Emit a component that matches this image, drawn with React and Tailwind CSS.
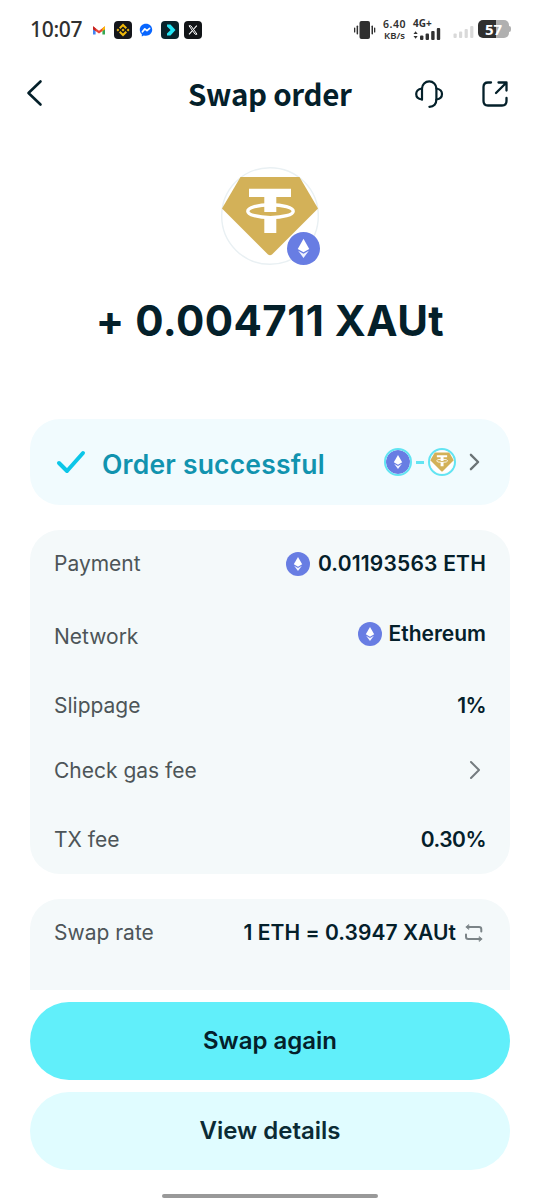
import React from "react";

function EthIcon({ className }) {
  return (
    <svg viewBox="0 0 32 32" className={className}>
      <circle cx="16" cy="16" r="16" fill="#687de3" />
      <path d="M16 6.5 L21.6 16.4 L16 19.6 L10.4 16.4 Z" fill="#fff" />
      <path d="M10.8 18.2 L16 21.2 L21.2 18.2 L16 25.2 Z" fill="#f1f3ff" />
    </svg>
  );
}

function TetherGoldIcon({ className }) {
  return (
    <svg viewBox="0 0 98 98" className={className}>
      <circle cx="49" cy="49" r="48.3" fill="#fff" stroke="#e9f0f3" strokeWidth="1.4" />
      <path d="M19.5 10 H78.5 L97 41.5 L51 87.5 Q49 89 47 87.5 L1 41.5 Z" fill="#d3b158" />
      <path d="M28 21.7 H70 V30 H55.3 V45 H43.3 V30 H28 Z" fill="#fff" />
      <path d="M43.3 50 H55.3 V66 H43.3 Z" fill="#fff" />
      <ellipse cx="49.5" cy="44.2" rx="22.7" ry="6.4" fill="none" stroke="#fff" strokeWidth="3.4" />
    </svg>
  );
}

function Chevron({ className, width = 2.2 }) {
  return (
    <svg viewBox="0 0 12 20" className={className} fill="none" stroke="currentColor" strokeWidth={width} strokeLinecap="round" strokeLinejoin="round">
      <path d="M2 2 L10 10 L2 18" />
    </svg>
  );
}

function StatusBar() {
  return (
    <div className="flex h-[60px] shrink-0 items-center justify-between pl-[30px] pr-[29px]">
      <div className="flex items-center">
        <span className="mb-[2px] w-[60px] font-['Noto_Sans'] text-[21px] font-medium leading-none tracking-[-0.3px] text-[#303030]">10:07</span>
        <div className="flex items-center gap-[5.5px]">
          {/* Gmail */}
          <svg viewBox="0 0 18 18" className="h-[18px] w-[18px]">
            <path d="M3 6 V13.5 H5.6 V8" fill="#4285f4" />
            <path d="M15 6 V13.5 H12.4 V8" fill="#34a853" />
            <path d="M3 5.2 L9 9.8 L15 5.2 V8.2 L9 12.6 L3 8.2 Z" fill="#ea4335" />
            <path d="M12.4 7.2 L15 5.2 V8.2 L12.4 10 Z" fill="#fbbc04" />
            <path d="M3 5.2 L5.6 7.2 V10 L3 8.2 Z" fill="#c5221f" />
          </svg>
          {/* Binance */}
          <svg viewBox="0 0 18 18" className="h-[18px] w-[18px]">
            <rect width="18" height="18" rx="4" fill="#14161b" />
            <g fill="#f0b90b">
              <path d="M9 2.6 L13 6.6 L11.6 8 L9 5.4 L6.4 8 L5 6.6 Z" />
              <path d="M9 15.4 L13 11.4 L11.6 10 L9 12.6 L6.4 10 L5 11.4 Z" />
              <path d="M9 7.5 L10.5 9 L9 10.5 L7.5 9 Z" />
              <path d="M3.9 7.6 L5.3 9 L3.9 10.4 L2.5 9 Z" />
              <path d="M14.1 7.6 L15.5 9 L14.1 10.4 L12.7 9 Z" />
            </g>
          </svg>
          {/* Messenger */}
          <svg viewBox="0 0 18 18" className="h-[18px] w-[18px]">
            <path d="M9 2.8 C5.4 2.8 2.8 5.4 2.8 8.8 C2.8 10.6 3.5 12.2 4.8 13.3 V15.4 L6.8 14.4 C11.4 15.7 15.2 12.8 15.2 8.8 C15.2 5.4 12.6 2.8 9 2.8 Z" fill="#0866ff" />
            <path d="M5.4 10.8 L7.8 7.9 L10 9.6 L12.6 7.3" fill="none" stroke="#fff" strokeWidth="1.7" strokeLinejoin="round" strokeLinecap="round" />
          </svg>
          <svg viewBox="0 0 18 18" className="h-[18px] w-[18px]">
            <rect width="18" height="18" rx="4" fill="#08232b" />
            <path d="M6 3.5 H9.5 L14.5 9 L9.5 14.5 H6 V12.6 L9.6 9 L6 5.4 Z" fill="#22e5f5" />
          </svg>
          {/* X */}
          <svg viewBox="0 0 18 18" className="h-[18px] w-[18px]" fill="none" stroke="#fff">
            <rect width="18" height="18" rx="4" fill="#111417" stroke="none" />
            <path d="M5 4.8 H6.9 L13 13.2 H11.1 Z" strokeWidth="1" />
            <path d="M12.8 4.6 L9.8 8 M8.2 9.9 L5 13.4" strokeWidth="1.1" />
          </svg>
        </div>
      </div>

      <div className="flex items-center text-[#303030]">
        <svg viewBox="0 0 22 20" className="h-5 w-[22px]" fill="currentColor">
          <rect x="5.5" y="1" width="10.5" height="18" rx="2" />
          <rect x="0" y="7.5" width="1.3" height="5" rx="0.6" />
          <rect x="2.6" y="5.5" width="1.5" height="9" rx="0.7" />
          <rect x="17.5" y="5.5" width="1.5" height="9" rx="0.7" />
          <rect x="20" y="7.5" width="1.3" height="5" rx="0.6" />
        </svg>
        <div className="ml-[6px] mr-px flex w-[25px] flex-col items-center font-['Noto_Sans'] text-[9.5px] font-semibold leading-[11px]">
          <span className="text-[10.5px] tracking-[0.5px]">6.40</span>
          <span>KB/s</span>
        </div>
        <div className="ml-[5px] flex w-7 flex-col">
          <span className="h-[8px] font-['Noto_Sans'] text-[10px] font-bold leading-[7px]">4G+</span>
          <svg viewBox="0 0 28 13" className="h-[13px] w-7" fill="currentColor">
            <path d="M0.5 6 L2.6 3.2 L4.7 6 Z M0.5 8 L2.6 10.8 L4.7 8 Z" />
            <rect x="7" y="7.6" width="3.4" height="4.4" rx="1" />
            <rect x="12.6" y="5.4" width="3.4" height="6.6" rx="1" />
            <rect x="18.2" y="3" width="3.4" height="9" rx="1" />
            <rect x="23.8" y="0" width="3.4" height="12" rx="1" />
          </svg>
        </div>
        <svg viewBox="0 0 21 13" className="ml-3 mt-[5px] h-[13px] w-[21px]" fill="#d9d9d9">
          <rect x="0.5" y="7.6" width="3.2" height="4.4" rx="1" />
          <rect x="6" y="5.4" width="3.2" height="6.6" rx="1" />
          <rect x="11.6" y="3" width="3.2" height="9" rx="1" />
          <rect x="17.2" y="0" width="3.2" height="12" rx="1" />
        </svg>
        <div className="ml-[4px] mb-[2px] flex items-center">
          <div className="flex h-[18px] w-[31px] items-center justify-center rounded-[5px] bg-linear-to-r from-[#303030] from-57% to-[#b0b0b0] to-57% font-['Noto_Sans'] text-[15px] font-bold leading-none text-white">57</div>
          <div className="h-[6px] w-[2px] rounded-r bg-[#b0b0b0]" />
        </div>
      </div>
    </div>
  );
}

function Header() {
  return (
    <div className="flex h-[70px] shrink-0 items-center text-[#04202a]">
      <svg viewBox="0 0 18 28" className="ml-[26px] mb-[4px] h-7 w-[18px]" fill="none" stroke="currentColor" strokeWidth="2.6" strokeLinecap="round" strokeLinejoin="round">
        <path d="M14.5 2.5 L2.5 14 L14.5 25.5" />
      </svg>
      <h1 className="mb-[3px] ml-[144px] w-[226px] whitespace-nowrap font-['Noto_Sans_CJK_SC',sans-serif] text-[29.5px] font-bold leading-none tracking-[-0.3px]">Swap order</h1>
      <svg viewBox="0 0 30 30" className="mb-[3px] h-[30px] w-[30px]" fill="none" stroke="currentColor" strokeWidth="2.2" strokeLinecap="round" strokeLinejoin="round">
        <path d="M8 20.5 V9.5 A7.2 7.2 0 0 1 22.4 9.5 V20 C22.4 24.8 20 27.8 15.4 27.8" />
        <path d="M8 9.5 C4.2 10.2 2.2 12 2.2 15 C2.2 18 4.2 20 8 20.5" />
        <path d="M22.4 9.5 C26 10.2 28 12 28 15 C28 18 26 20 22.4 20.5" />
      </svg>
      <svg viewBox="0 0 28 28" className="mb-[3px] ml-[37px] h-7 w-7" fill="none" stroke="currentColor" strokeWidth="2.3" strokeLinecap="round" strokeLinejoin="round">
        <path d="M10 2.5 H7 C4 2.5 2.5 4 2.5 7 V21 C2.5 24 4 25.5 7 25.5 H21 C24 25.5 25.5 24 25.5 21 V18" />
        <path d="M17.5 2.5 H25.5 V10.5 M25 3 L15 13" />
      </svg>
    </div>
  );
}

function Row({ label, className, valueClass = "", children }) {
  return (
    <div className={`flex items-center justify-between ${className}`}>
      <span className="text-[21px] text-[#4d5558]">{label}</span>
      <span className={`flex items-center text-[21px] font-semibold text-[#04202a] ${valueClass}`}>{children}</span>
    </div>
  );
}

export default function App() {
  return (
    <div className="flex h-[1200px] w-[540px] flex-col overflow-hidden bg-white font-['Inter',sans-serif] leading-none">
      <StatusBar />
      <Header />

      <div className="flex h-[289px] shrink-0 flex-col items-center pt-[37px]">
        <div className="relative h-[98px] w-[98px]">
          <TetherGoldIcon className="h-full w-full" />
          <EthIcon className="absolute bottom-0 -right-px h-[33px] w-[33px]" />
        </div>
        <div className="mt-[35px] whitespace-nowrap text-[42px] font-bold tracking-[0.45px] text-[#04202a]">+ 0.004711 XAUt</div>
      </div>

      <div className="mx-[30px] flex h-[86px] shrink-0 items-center rounded-[30px] bg-[#f1fbfe] pl-[26px] pr-[30px]">
        <svg viewBox="0 0 30 24" className="h-6 w-[30px]" fill="none" stroke="#0cc6e8" strokeWidth="4" strokeLinecap="round" strokeLinejoin="round">
          <path d="M3 13 L11 21 L27 3" />
        </svg>
        <span className="ml-[16px] mt-[4px] flex-1 whitespace-nowrap text-[26.5px] font-semibold tracking-[0.2px] text-[#1193af]">Order successful</span>
        <EthIcon className="h-7 w-7 rounded-full border-2 border-[#62e4f2]" />
        <span className="mx-1 h-[3px] w-2 bg-[#62e4f2]" />
        <TetherGoldIcon className="h-7 w-7 rounded-full border-2 border-[#62e4f2]" />
        <Chevron className="ml-[13px] h-[18px] w-[11px] text-[#6b7376]" width={2.6} />
      </div>

      <div className="mx-[30px] mt-[25px] flex h-[344px] shrink-0 flex-col rounded-[30px] bg-[#f4f9fa] px-6">
        <Row label="Payment" className="h-[67px]" valueClass="tracking-[0.2px]">
          <EthIcon className="mr-[8px] h-6 w-6" />
          0.01193563 ETH
        </Row>
        <Row label="Network" className="h-[79px]" valueClass="mb-1.5">
          <EthIcon className="mr-[6px] h-6 w-6" />
          Ethereum
        </Row>
        <Row label="Slippage" className="h-[58px]" valueClass="tracking-[-0.6px]">1%</Row>
        <Row label="Check gas fee" className="h-[72px]">
          <Chevron className="mr-[5px] h-5 w-3 text-[#747c7f]" width={2} />
        </Row>
        <Row label="TX fee" className="h-[67px]" valueClass="tracking-[-0.5px]">0.30%</Row>
      </div>

      <div className="mx-[30px] mt-[25px] h-[91px] shrink-0 rounded-t-[30px] bg-[#f4f9fa] px-6">
        <Row label="Swap rate" className="h-[67px]" valueClass="tracking-[0.05px]">
          1 ETH = 0.3947 XAUt
          <svg viewBox="0 0 20 20" className="ml-[8px] mr-[2px] mt-px h-5 w-5" fill="none" stroke="#7b8487" strokeWidth="2" strokeLinecap="round" strokeLinejoin="round">
            <path d="M4 4 H15 Q17.3 4 17.3 6.3 V8.5 M2 11.5 V13.7 Q2 16 4.3 16 H16" />
            <path d="M4.5 1.8 L1.8 4 L4.5 6.2 Z M15.5 13.8 L18.2 16 L15.5 18.2 Z" fill="#7b8487" strokeWidth="0.8" />
          </svg>
        </Row>
      </div>

      <div className="mt-3 flex shrink-0 flex-col gap-3 px-[30px]">
        <button className="h-[78px] rounded-full bg-[#61effa] text-[24px] font-semibold text-[#04202a]">Swap again</button>
        <button className="h-[78px] rounded-full bg-[#e0fcff] text-[24px] font-semibold text-[#0b2b35]">View details</button>
      </div>
      <div className="mx-auto mt-6 h-1 w-[216px] shrink-0 rounded-full bg-[#999]" />
    </div>
  );
}
